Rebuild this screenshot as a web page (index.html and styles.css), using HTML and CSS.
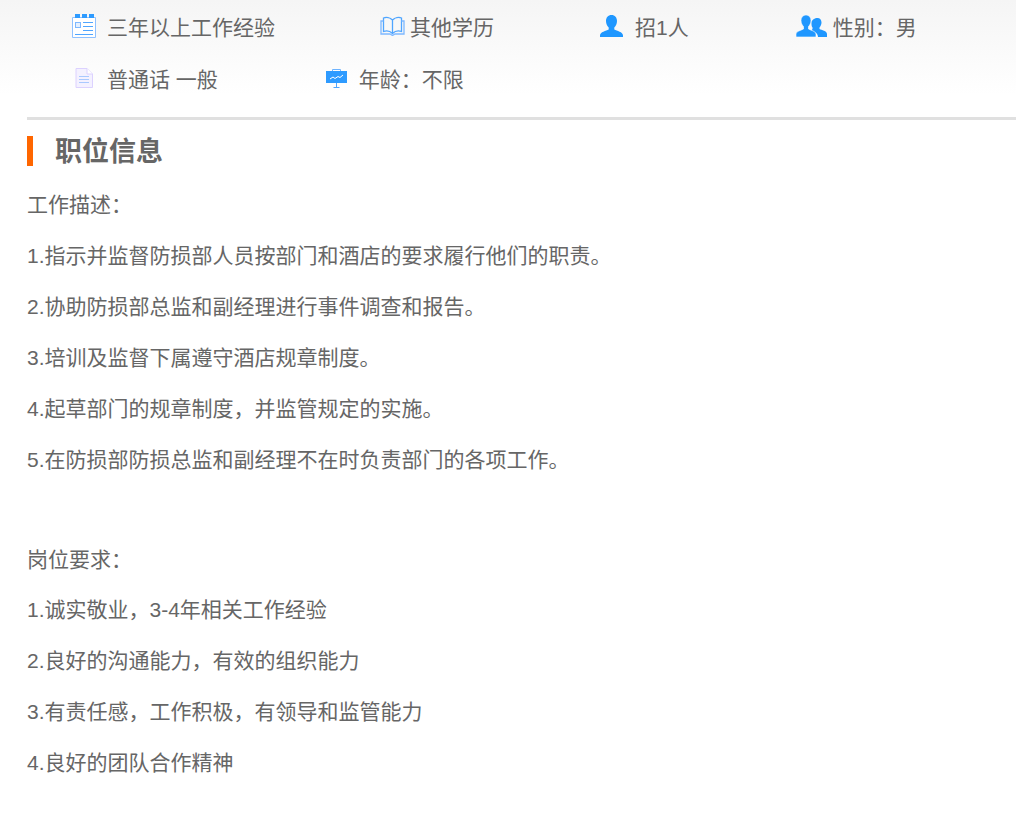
FILE: index.html
```html
<!DOCTYPE html>
<html lang="zh-CN">
<head>
<meta charset="utf-8">
<title>职位信息</title>
<link rel="stylesheet" href="styles.css">
</head>
<body>
<header class="facts">
  <div class="fact">
    <svg class="ico ico-exp" viewBox="0 0 24 24"><path d="M.5 3.500h23v20H.5z" fill="#fff" stroke="#8fc1ff"/><rect x="3" y="0" width="5" height="4" fill="#2e9bff"/><rect x="10" y="0" width="5" height="4" fill="#2e9bff"/><rect x="17" y="0" width="5" height="4" fill="#2e9bff"/><rect x="3.500" y="8.500" width="5" height="5" fill="#e4f0ff" stroke="#7db8ff"/><path d="M11 8.500h10M11 12.500h10M11 16.500h10M3 20.500h18" stroke="#4fa5ff" fill="none"/></svg>
    <span>三年以上工作经验</span>
  </div>
  <div class="fact fact-edu">
    <svg class="ico ico-edu" viewBox="0 0 25 20"><path d="M12.500 4C10 1.500 6 1 3.500 2v13.500c3-1 6.500-.5 9 2 2.500-2.500 6-3 9-2V2c-2.500-1-6.500-.5-9 2zM12.500 4v13.500" fill="none" stroke="#4fa5ff" stroke-width="1.300"/><path d="M3.500 5H1v13h9l2.500 1.500L15 18h9V5h-2.500" fill="none" stroke="#7db8ff" stroke-width="1.300"/></svg>
    <span>其他学历</span>
  </div>
  <div class="fact">
    <svg class="ico ico-one" viewBox="0 0 23 22"><path d="M11.500 0c3.400 0 5.500 2.600 5.500 6 0 2.800-1.200 5-2.700 6.500v2c2.500 1.500 8.700 2.200 8.700 6v1.500H0V20.500c0-3.800 6.200-4.500 8.700-6v-2C7.200 11 6 8.800 6 6c0-3.400 2.100-6 5.500-6z" fill="#1f97ff"/></svg>
    <span>招1人</span>
  </div>
  <div class="fact fact-gender">
    <svg class="ico ico-two" viewBox="0 0 31 22"><path d="M21.500 3c2.500 0 4 2 4 4.500 0 2.200-.9 3.800-2 5v1.500c2 1.200 7.500 1.800 7.500 5V22h-9c0-3.500-3-5-6.500-6.500.6-1 1-1.500 1-1.500v-1.500c-1.100-1.200-1-2.800-1-5C15.500 5 19 3 21.500 3z" fill="#1f97ff"/><path d="M10 0c3 0 5 2.400 5 5.500 0 2.600-1.100 4.600-2.500 6V14c2.300 1.400 7.500 2 7.500 5.500V22H0v-2.500C0 16 5.200 15.400 7.500 14v-2.500C6.100 10.100 5 8.100 5 5.500 5 2.400 7 0 10 0z" fill="#1f97ff" stroke="#fff" stroke-width=".6"/></svg>
    <span>性别：男</span>
  </div>
  <div class="fact">
    <svg class="ico ico-lang" viewBox="0 0 18 20"><path d="M1 .5h11l5.500 5.500v13.500H1z" fill="#f4f1ff" stroke="#dcd2ff"/><path d="M12 .5V6h5.500" fill="#fff" stroke="#dcd2ff"/><path d="M4 8.500h10M4 11.500h10M4 14.500h10" stroke="#a9c9ff"/></svg>
    <span>普通话 一般</span>
  </div>
  <div class="fact fact-age">
    <svg class="ico ico-age" viewBox="0 0 21 19"><path d="M6.500 2V.5h8V2" fill="none" stroke="#6fb4ff"/><rect x="0" y="2" width="21" height="12" fill="#2e9bff"/><path d="M4 10l3-2 2 1.500 3-2 2 1 3-2.500" fill="none" stroke="#fff"/><path d="M10.500 14v4M7.500 18.500h6" stroke="#4fa5ff"/></svg>
    <span>年龄：不限</span>
  </div>
</header>
<main class="content">
  <h2 class="section-title">职位信息</h2>
  <section class="duties">
    <p>工作描述：</p>
    <p>1.指示并监督防损部人员按部门和酒店的要求履行他们的职责。</p>
    <p>2.协助防损部总监和副经理进行事件调查和报告。</p>
    <p>3.培训及监督下属遵守酒店规章制度。</p>
    <p>4.起草部门的规章制度，并监管规定的实施。</p>
    <p>5.在防损部防损总监和副经理不在时负责部门的各项工作。</p>
  </section>
  <section class="requirements">
    <p>岗位要求：</p>
    <p>1.诚实敬业，3-4年相关工作经验</p>
    <p>2.良好的沟通能力，有效的组织能力</p>
    <p>3.有责任感，工作积极，有领导和监管能力</p>
    <p>4.良好的团队合作精神</p>
  </section>
</main>
</body>
</html>
```
FILE: styles.css
```css
html, body { margin: 0; padding: 0; }
body {
  background: #fff;
  color: #666;
  font-family: "Liberation Sans", "Noto Sans CJK SC", sans-serif;
  font-size: 21px;
  overflow: hidden;
}
.facts {
  display: flex;
  flex-wrap: wrap;
  align-content: flex-start;
  column-gap: 105px;
  height: 117px;
  box-sizing: border-box;
  padding: 0 0 0 72px;
  background: linear-gradient(#f5f5f5, #fff 95px);
}
.fact {
  display: flex;
  align-items: center;
  height: 52px;
  white-space: nowrap;
}
.fact-edu { margin-right: 1px; }
.fact-gender { margin-left: 2px; }
.fact-age { margin-left: 3px; }
.ico { display: block; flex: none; }
.ico-exp { width: 24px; height: 24px; margin-right: 11px; }
.ico-edu { width: 25px; height: 20px; margin-right: 5px; }
.ico-one { width: 23px; height: 22px; margin-right: 12px; }
.ico-two { width: 31px; height: 22px; margin-right: 6px; }
.ico-lang { width: 18px; height: 20px; margin: 0 14px 0 3px; }
.ico-age { width: 21px; height: 19px; margin-right: 12px; }
.content {
  margin-left: 27px;
  border-top: 3px solid;
  border-image: linear-gradient(#e0e0e0 66%, #f3f3f3 66%) 1;
}
.section-title {
  margin: 16px 0 13px;
  border-left: 6px solid #ff6600;
  height: 30px;
  padding-left: 22px;
  font-size: 27px;
  line-height: 32px;
  font-weight: 700;
  color: #666;
}
p { margin: 0; }
.duties { line-height: 51px; }
.requirements { margin-top: 49.7px; line-height: 50.75px; }
```
